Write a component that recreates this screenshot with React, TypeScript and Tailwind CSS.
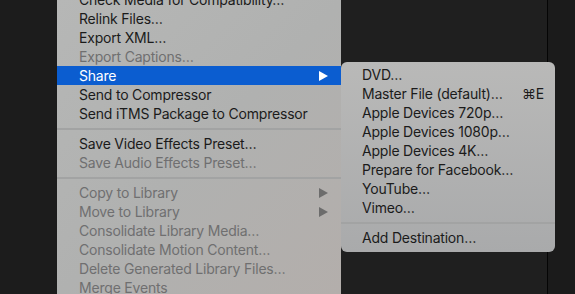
import React from 'react';

type Item = { label: string; disabled?: boolean; arrow?: boolean; active?: boolean; shortcut?: string } | 'sep';

const mainItems: Item[] = [
  { label: 'Check Media for Compatibility…' },
  { label: 'Relink Files…' },
  { label: 'Export XML…' },
  { label: 'Export Captions…', disabled: true },
  { label: 'Share', arrow: true, active: true },
  { label: 'Send to Compressor' },
  { label: 'Send iTMS Package to Compressor' },
  'sep',
  { label: 'Save Video Effects Preset…' },
  { label: 'Save Audio Effects Preset…', disabled: true },
  'sep',
  { label: 'Copy to Library', disabled: true, arrow: true },
  { label: 'Move to Library', disabled: true, arrow: true },
  { label: 'Consolidate Library Media…', disabled: true },
  { label: 'Consolidate Motion Content…', disabled: true },
  { label: 'Delete Generated Library Files…', disabled: true },
  { label: 'Merge Events', disabled: true },
];

const shareItems: Item[] = [
  { label: 'DVD…' },
  { label: 'Master File (default)…', shortcut: '⌘E' },
  { label: 'Apple Devices 720p…' },
  { label: 'Apple Devices 1080p…' },
  { label: 'Apple Devices 4K…' },
  { label: 'Prepare for Facebook…' },
  { label: 'YouTube…' },
  { label: 'Vimeo…' },
  'sep',
  { label: 'Add Destination…' },
];

function Arrow({ color }: { color: string }) {
  return (
    <svg width="9" height="10" viewBox="0 0 9 10" className="shrink-0">
      <path d="M0 0 L9 5 L0 10 Z" fill={color} />
    </svg>
  );
}

function MenuRows({ items, pad }: { items: Item[]; pad: string }) {
  return (
    <>
      {items.map((it, i) =>
        it === 'sep' ? (
          <div key={i} className="h-[11px] flex items-center">
            <div className="h-[2px] w-full bg-[#a2a3a3]" />
          </div>
        ) : (
          <div
            key={i}
            className={`h-[19px] flex items-center ${pad} ${
              it.active ? 'bg-[#0b5dd0] text-white' : it.disabled ? 'text-[#6f6f70]' : 'text-[#1b1b1b]'
            }`}
          >
            <span className="flex-1 whitespace-nowrap">{it.label}</span>
            {it.shortcut && <span className="whitespace-nowrap">{it.shortcut}</span>}
            {it.arrow && <Arrow color={it.active ? '#ffffff' : '#6c6c6c'} />}
          </div>
        )
      )}
    </>
  );
}

export default function App() {
  return (
    <div
      className="relative h-[294px] w-[575px] overflow-hidden flex bg-[#1e1e1e] text-[14px] leading-[19px] tracking-[-0.2px]"
      style={{ fontFamily: 'Inter, "Noto Sans", sans-serif' }}
    >
      <div className="w-[57px] shrink-0 bg-[#1c1c1c]" />
      <div className="w-[284px] shrink-0 bg-gradient-to-br from-[#b6b7b6] via-[#b0b1b0] to-[#b3aeab]">
        <div className="-mt-[10px]">
          <MenuRows items={mainItems} pad="pl-[22px] pr-[13px]" />
        </div>
      </div>
      <div className="w-[206px] shrink-0 bg-[#1f1f1f]" />
      <div className="w-px shrink-0 bg-[#050505]" />
      <div className="flex-1 bg-[#1b1b1b]" />

      <div className="absolute left-[341px] top-[62px] w-[214px] h-[190px] rounded-[6px] pt-[3px] bg-gradient-to-b from-[#b9b9b8] to-[#a9aaab]">
        <MenuRows items={shareItems} pad="pl-[21px] pr-[11px]" />
      </div>
    </div>
  );
}
